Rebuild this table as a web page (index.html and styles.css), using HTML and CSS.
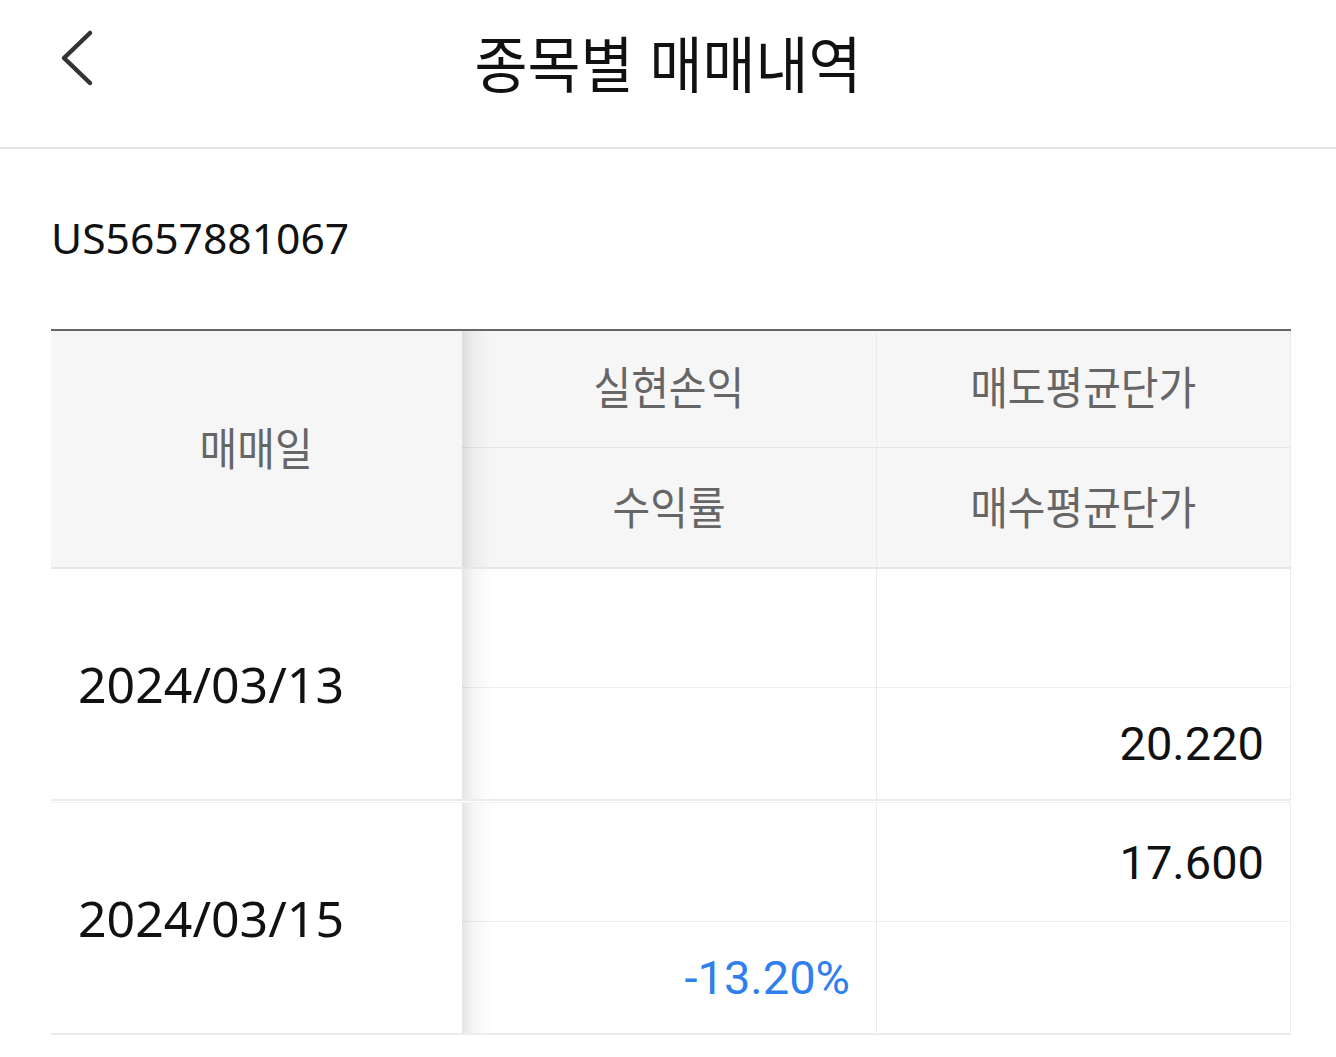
FILE: index.html
```html
<!DOCTYPE html>
<html lang="ko">
<head>
<meta charset="utf-8">
<title>종목별 매매내역</title>
<link rel="stylesheet" href="styles.css">
</head>
<body>
<header class="topbar">
  <button class="back" aria-label="뒤로">
    <svg width="40" height="60" viewBox="0 0 40 60"><path d="M31 5 L5 30 L31 55" fill="none" stroke="#333" stroke-width="4.5" stroke-linecap="round" stroke-linejoin="round"/></svg>
  </button>
  <h1 class="title"><span>종목별 매매내역</span></h1>
  <div class="spacer"></div>
</header>
<main class="content">
  <div class="code">US5657881067</div>
  <div class="table">
    <div class="thead">
      <div class="col-date head-date"><span class="kr">매매일</span></div>
      <div class="col-group">
        <div class="hcell top"><span class="kr">실현손익</span></div>
        <div class="hcell"><span class="kr">수익률</span></div>
      </div>
      <div class="col-group last">
        <div class="hcell top"><span class="kr">매도평균단가</span></div>
        <div class="hcell"><span class="kr">매수평균단가</span></div>
      </div>
    </div>
    <div class="trow">
      <div class="col-date">2024/03/13</div>
      <div class="col-group">
        <div class="cell top"></div>
        <div class="cell"></div>
      </div>
      <div class="col-group last">
        <div class="cell top"></div>
        <div class="cell">20.220</div>
      </div>
    </div>
    <div class="trow">
      <div class="col-date">2024/03/15</div>
      <div class="col-group">
        <div class="cell top"></div>
        <div class="cell minus">-13.20%</div>
      </div>
      <div class="col-group last">
        <div class="cell top">17.600</div>
        <div class="cell"></div>
      </div>
    </div>
  </div>
</main>
</body>
</html>
```
FILE: styles.css
```css
* { box-sizing: border-box; }
html, body { margin: 0; padding: 0; background: #fff; }
body {
  font-family: "Noto Sans", "Noto Sans CJK KR", sans-serif;
  color: #111;
  width: 1336px;
}
.topbar {
  height: 149px;
  border-bottom: 2px solid #e4e4e4;
  display: grid;
  grid-template-columns: 1fr auto 1fr;
  align-items: start;
}
.back {
  background: none;
  border: 0;
  padding: 0;
  margin: 28px 0 0 59px;
  width: 40px;
  height: 60px;
  justify-self: start;
  cursor: pointer;
}
.back svg { display: block; }
.title {
  margin: 22px 0 0 0;
  font-family: "Noto Sans CJK KR", sans-serif;
  font-weight: 400;
  font-size: 61px;
  line-height: 80px;
  color: #111;
  white-space: nowrap;
}
.title span {
  display: inline-block;
  transform: scaleX(0.944);
}
.content {
  padding: 0 45px 0 51px;
}
.code {
  font-family: "Noto Sans", sans-serif;
  font-size: 42.6px;
  line-height: 60px;
  margin-top: 58px;
  color: #111;
}
.table {
  margin-top: 62px;
  border-top: 2px solid #666;
}
.thead, .trow {
  display: grid;
  grid-template-columns: 411px 415px 414px;
}
.thead {
  background: #f6f6f6;
  border-bottom: 2px solid #e6e6e6;
}
.col-date {
  position: relative;
  display: flex;
  align-items: center;
  padding-left: 27px;
  font-family: "Noto Sans", sans-serif;
  font-size: 50px;
  color: #111;
}
.col-date::after {
  content: "";
  position: absolute;
  top: 0;
  bottom: 0;
  left: 100%;
  width: 30px;
  background: linear-gradient(to right, rgba(0,0,0,0.1), rgba(0,0,0,0.035) 40%, rgba(0,0,0,0));
  z-index: 2;
  pointer-events: none;
}
.head-date {
  justify-content: center;
  padding-left: 0;
  padding-bottom: 6px;
}
.col-group {
  display: flex;
  flex-direction: column;
  border-right: 1px solid #ebebeb;
}
.kr {
  display: inline-block;
  font-family: "Noto Sans CJK KR", sans-serif;
  font-size: 45px;
  color: #666;
  transform: scaleX(0.91);
  white-space: nowrap;
}
.hcell {
  height: 119px;
  display: flex;
  align-items: center;
  justify-content: center;
  padding-bottom: 4px;
}
.hcell.top {
  height: 117px;
  border-bottom: 1px solid #e6e6e6;
  padding-bottom: 8px;
}
.trow {
  border-bottom: 2px solid #ececec;
}
.trow + .trow {
  margin-top: 1px;
  border-top: 1px solid #f2f2f2;
}
.cell {
  height: 111px;
  display: flex;
  align-items: center;
  justify-content: flex-end;
  padding-right: 26px;
  font-family: "Roboto", sans-serif;
  font-size: 47px;
  color: #111;
}
.cell.top {
  height: 119px;
  border-bottom: 1px solid #efefef;
}
.cell.minus { color: #2f80ed; }
```
